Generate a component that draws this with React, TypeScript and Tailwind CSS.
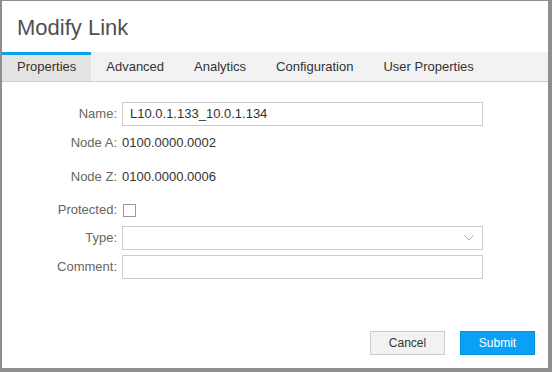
import React from "react";

const tabs = ["Properties", "Advanced", "Analytics", "Configuration", "User Properties"];

const Row = ({ label, h, children, className = "" }: { label: string; h: string; children?: React.ReactNode; className?: string }) => (
  <div className={`flex items-center ${h} ${className}`}>
    <div className="w-[120px] pr-[5px] text-right text-[13px] text-[#666]">{label}</div>
    <div className="flex-1 flex items-center">{children}</div>
  </div>
);

export default function App() {
  return (
    <div
      className="w-[552px] h-[372px] bg-[#8e8e8e] pt-px pl-[2px]"
      style={{ fontFamily: '"Liberation Sans", Arial, sans-serif' }}
    >
      <div className="w-[546px] h-[367px] bg-white flex flex-col">
        {/* header */}
        <div className="h-[51px] pl-[15px] pt-[14px] text-[22px] leading-[26px] text-[#505050]">Modify Link</div>

        {/* tabs */}
        <div className="flex h-[30px] bg-[#f2f2f2] border-b border-[#cfcfcf]">
          {tabs.map((t, i) => (
            <div
              key={t}
              className={`px-[15px] text-[13px] text-[#333] flex items-center ${
                i === 0 ? "bg-[#e3e3e3] border-t-[3px] border-[#0aa0f0] pb-[3px]" : ""
              }`}
            >
              {t}
            </div>
          ))}
        </div>

        {/* form */}
        <div className="pt-[20px] pr-[65px]">
          <Row label="Name:" h="h-[24px]">
            <div className="w-full h-[24px] border border-[#ccc] pl-[7px] flex items-center text-[13px] text-[#333]">
              L10.0.1.133_10.0.1.134
            </div>
          </Row>
          <Row label="Node A:" h="h-[34px]">
            <span className="text-[13px] text-[#333]">0100.0000.0002</span>
          </Row>
          <Row label="Node Z:" h="h-[34px]">
            <span className="text-[13px] text-[#333]">0100.0000.0006</span>
          </Row>
          <Row label="Protected:" h="h-[32px]">
            <div className="ml-px w-[13px] h-[13px] border border-[#999] bg-white" />
          </Row>
          <Row label="Type:" h="h-[24px]">
            <div className="w-full h-[24px] border border-[#ccc] flex items-center justify-end pr-[8px]">
              <svg width="10" height="6" viewBox="0 0 10 6" fill="none">
                <path d="M0.5 0.5 L5 5 L9.5 0.5" stroke="#aaa" strokeWidth="1" />
              </svg>
            </div>
          </Row>
          <Row label="Comment:" h="h-[24px]" className="mt-[5px]">
            <div className="w-full h-[24px] border border-[#ccc]" />
          </Row>
        </div>

        {/* footer */}
        <div className="mt-auto mb-[13px] flex justify-end gap-[15px] pr-[13px]">
          <button className="w-[75px] h-[24px] bg-[#f2f2f2] border border-[#ccc] text-[12px] text-[#333]">Cancel</button>
          <button className="w-[75px] h-[24px] bg-[#0aa0f5] border border-[#0a8fdc] text-[12px] text-white">Submit</button>
        </div>
      </div>
    </div>
  );
}
